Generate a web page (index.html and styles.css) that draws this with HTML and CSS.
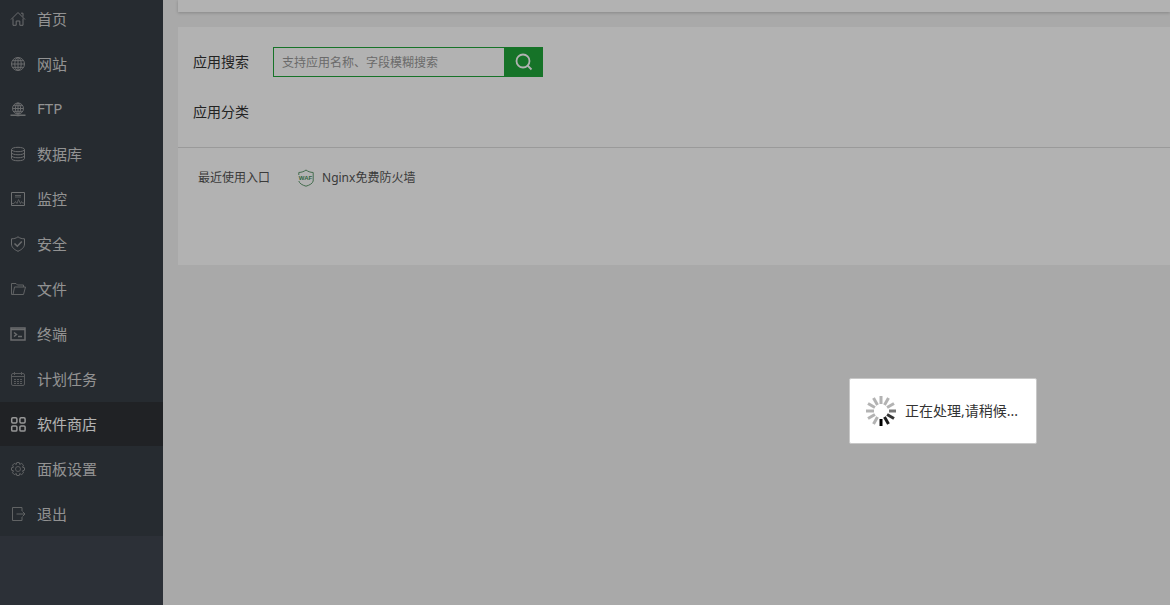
FILE: index.html
```html
<!DOCTYPE html>
<html lang="zh-CN">
<head>
<meta charset="utf-8">
<title>软件商店</title>
<link rel="stylesheet" href="styles.css">
</head>
<body>
<div class="app">
  <nav class="sidebar">
    <ul class="menu">
      <li><a class="item" href="#"><svg class="icon" viewBox="0 0 16 16"><path d="M1 8.5 8 1.5l7 7M3 7.5v6.8h3.2V10h3.600v4.300H13V7.500M11 2.200h2v3.500"/></svg><span class="text">首页</span></a></li>
      <li><a class="item" href="#"><svg class="icon" viewBox="0 0 16 16"><circle cx="8" cy="8" r="6.500"/><ellipse cx="8" cy="8" rx="3.200" ry="6.500"/><path d="M8 1.500v13M1.500 8h13M2.600 4.700h10.800M2.600 11.300h10.800"/></svg><span class="text">网站</span></a></li>
      <li><a class="item" href="#"><svg class="icon" viewBox="0 0 16 16"><circle cx="8" cy="7.500" r="5.500"/><ellipse cx="8" cy="7.500" rx="2.600" ry="5.500"/><path d="M8 2v11M2.500 7.500h11M3.500 4.700h9M3.500 10.300h9"/><path class="bold" d="M.5 14.300h15M6.500 14.500h3"/></svg><span class="text">FTP</span></a></li>
      <li><a class="item" href="#"><svg class="icon" viewBox="0 0 16 16"><ellipse cx="8" cy="3.500" rx="6.500" ry="2.200"/><path d="M1.500 3.500v9c0 3 13 3 13 0v-9M1.500 6.500c0 3 13 3 13 0M1.500 9.500c0 3 13 3 13 0"/></svg><span class="text">数据库</span></a></li>
      <li><a class="item" href="#"><svg class="icon dim" viewBox="0 0 16 16"><path class="frame" d="M1.500 1.500h13v13h-13z"/><path d="M5 4.500h6M5 6h6M2 12.500h2l1.500-2 1.500 2 1.500-4 2 4 1-2 1 1.500h2"/></svg><span class="text">监控</span></a></li>
      <li><a class="item" href="#"><svg class="icon" viewBox="0 0 16 16"><path d="M8 .8c2 1.500 4 2 6.500 2V8c0 3.500-3 5.700-6.500 7.300C4.500 13.700 1.500 11.500 1.500 8V2.800c2.500 0 4.500-.5 6.500-2z"/><path class="bold" d="m4.500 7.500 2.800 2.700 4.500-4.700"/></svg><span class="text">安全</span></a></li>
      <li><a class="item" href="#"><svg class="icon dim" viewBox="0 0 16 16"><path class="folder" d="M3 13.500H1.500v-11H6l1.500 1.500h6v2M3 13.500 4.500 6h11L13.500 13.500z"/></svg><span class="text">文件</span></a></li>
      <li><a class="item" href="#"><svg class="icon" viewBox="0 0 16 16"><path class="bold" d="M1 2h14v12H1z"/><path class="bold" d="M1 3.500h14"/><path class="bold" d="m4 6.500 2.500 2-2.500 2M8 10.500h4"/></svg><span class="text">终端</span></a></li>
      <li><a class="item" href="#"><svg class="icon dim" viewBox="0 0 16 16"><rect x="1.500" y="2.500" width="13" height="12" rx="1.500"/><path d="M1.500 5.500h13M4.500 1v3M11.500 1v3"/><path class="dots" d="M4 8.500h8M4 10.500h8M4 12.500h8"/></svg><span class="text">计划任务</span></a></li>
      <li><a class="item active" href="#" aria-current="page"><svg class="icon" viewBox="0 0 16 16"><g class="bold"><rect x="1.700" y="1.700" width="5.200" height="5.200" rx="1.200"/><rect x="9.900" y="1.700" width="5.200" height="5.200" rx="1.200"/><rect x="1.700" y="9.900" width="5.200" height="5.200" rx="1.200"/><rect x="9.900" y="9.900" width="5.200" height="5.200" rx="1.200"/></g></svg><span class="text">软件商店</span></a></li>
      <li><a class="item" href="#"><svg class="icon dim" viewBox="0 0 16 16"><circle cx="8" cy="8" r="2.500"/><path class="folder" d="m6.800 1.500h2.400l.5 1.900 2-1 1.800 1.800-1 2 2 .6v2.400l-2 .6 1 2-1.800 1.800-2-1-.5 1.900H6.800l-.5-1.900-2 1-1.800-1.800 1-2-2-.6V6.800l2-.6-1-2 1.800-1.800 2 1z"/></svg><span class="text">面板设置</span></a></li>
      <li><a class="item" href="#"><svg class="icon dim" viewBox="0 0 16 16"><path class="folder" d="M12 5V1.500H2.500v13H12V11M6.500 8h8M12.500 5.500 15 8l-2.500 2.500"/></svg><span class="text">退出</span></a></li>
    </ul>
  </nav>
  <main class="content">
    <section class="topbar"></section>
    <section class="panel">
      <div class="filters">
        <form class="row">
          <label class="label text" for="search">应用搜索</label>
          <div class="search">
            <input class="search-input" id="search" type="text" placeholder="支持应用名称、字段模糊搜索">
            <button class="search-button" type="button" aria-label="搜索"><svg class="search-icon" viewBox="0 0 18 18"><circle cx="8" cy="8" r="6.500"/><path d="m12.500 12.500 4 4"/></svg></button>
          </div>
        </form>
        <div class="row"><span class="label text">应用分类</span></div>
      </div>
      <div class="recent">
        <span>最近使用入口</span>
        <a class="recent-link" href="#"><svg class="waf" viewBox="0 0 16 18"><path d="M.8 6V3.500C4 3.300 6 2.500 8 1c2 1.500 4 2.300 7.200 2.500V6M.8 12c.7 2.500 3.200 4 7.200 5.200 4-1.200 6.500-2.700 7.200-5.200M15.200 6v6"/><text x="7.500" y="11" text-anchor="middle">WAF</text></svg>Nginx免费防火墙</a>
      </div>
    </section>
  </main>
</div>
<div class="overlay"></div>
<div class="dialog" role="status">
  <svg class="spinner" viewBox="0 0 32 32">
    <g stroke="#b3b3b3">
      <path d="M16 1v8"/><path d="M16 1v8" transform="rotate(30 16 16)"/><path d="M16 1v8" transform="rotate(60 16 16)"/>
      <path d="M16 1v8" transform="rotate(210 16 16)"/><path d="M16 1v8" transform="rotate(240 16 16)"/><path d="M16 1v8" transform="rotate(270 16 16)"/><path d="M16 1v8" transform="rotate(300 16 16)"/><path d="M16 1v8" transform="rotate(330 16 16)"/>
    </g>
    <path stroke="#777" d="M24 16h7"/>
    <path stroke="#333" d="M16 1v8" transform="rotate(120 16 16)"/>
    <path stroke="#1c1c1c" d="M16 1v8" transform="rotate(150 16 16)"/>
    <path stroke="#000" d="M16 24v7"/>
  </svg>
  <span class="text">正在处理,请稍候...</span>
</div>
</body>
</html>
```
FILE: styles.css
```css
* {
  box-sizing: border-box;
}

body {
  margin: 0;
  background: #f2f2f2;
  color: #333;
  font-family: "Noto Sans", "Noto Sans CJK SC", sans-serif;
  font-size: 14px;
  overflow: hidden;
}

.app {
  display: flex;
  min-height: 100vh;
}

.sidebar {
  flex: none;
  width: 163px;
  background: #3f4550;
}

.menu {
  list-style: none;
  margin: -3px 0 0;
  padding: 0;
  background: #373e46;
}

.menu li {
  padding-bottom: 1px;
}

.menu li:last-child {
  padding-bottom: 0;
}

.item {
  display: flex;
  align-items: center;
  gap: 11px;
  height: 44px;
  padding-left: 10px;
  color: #d2d2d2;
  font-size: 15px;
  text-decoration: none;
}

.item.active {
  background: #2e3136;
  color: #fff;
}

.text {
  padding-bottom: 2px;
}

.icon {
  width: 16px;
  height: 16px;
  fill: none;
  stroke: #999b9d;
  stroke-width: 1;
}

.icon.dim {
  stroke: #7f8285;
}

.frame {
  stroke: #a0a2a4;
}

.folder {
  stroke: #8b8e90;
}

.active .icon {
  stroke: #d8d8d8;
}

.bold {
  stroke-width: 1.5;
}

.dots {
  stroke-dasharray: 2 1;
}

.content {
  flex: 1;
  min-width: 0;
  padding-left: 15px;
}

.topbar {
  height: 12px;
  margin-bottom: 15px;
  background: #fff;
  box-shadow: 0 1px 3px rgba(0, 0, 0, 0.2);
}

.panel {
  min-height: 238px;
  background: #fff;
}

.filters {
  display: flex;
  flex-direction: column;
  gap: 20px;
  padding: 20px 15px;
  border-bottom: 1px solid #ddd;
}

.row {
  display: flex;
  align-items: center;
  height: 30px;
  margin: 0;
}

.label {
  width: 80px;
}

.search {
  display: flex;
  width: 270px;
  height: 30px;
}

.search-input {
  flex: 1;
  min-width: 0;
  padding: 0 8px;
  border: 1px solid #20a53a;
  border-right: 0;
  background: #fff;
  color: #333;
  font: inherit;
  font-size: 12px;
}

.search-input::placeholder {
  color: #999;
}

.search-button {
  display: flex;
  align-items: center;
  justify-content: center;
  width: 39px;
  padding: 0;
  border: 0;
  background: #20a53a;
}

.search-icon {
  width: 18px;
  height: 18px;
  fill: none;
  stroke: #fff;
  stroke-width: 1.8;
}

.recent {
  display: flex;
  align-items: center;
  gap: 28px;
  padding: 20px;
  color: #555;
  font-size: 12px;
  line-height: 20px;
}

.recent-link {
  display: flex;
  align-items: center;
  gap: 8px;
  color: #555;
  text-decoration: none;
}

.waf {
  width: 16px;
  height: 18px;
  fill: none;
  stroke: #629b70;
  stroke-width: 1;
  overflow: visible;
}

.waf text {
  fill: #4a8f5b;
  stroke: none;
  font-family: "Liberation Sans", sans-serif;
  font-size: 6px;
  font-weight: 700;
}

.overlay {
  position: fixed;
  inset: 0;
  background: rgba(0, 0, 0, 0.3);
}

.dialog {
  position: fixed;
  top: 378px;
  left: 849px;
  display: flex;
  align-items: center;
  gap: 8px;
  width: 188px;
  height: 66px;
  padding: 0 15px;
  border: 1px solid #c8c8c8;
  border-radius: 2px;
  background: #fff;
  color: #333;
  white-space: nowrap;
}

.spinner {
  flex: none;
  width: 32px;
  height: 32px;
  fill: none;
  stroke-width: 3;
}
```
